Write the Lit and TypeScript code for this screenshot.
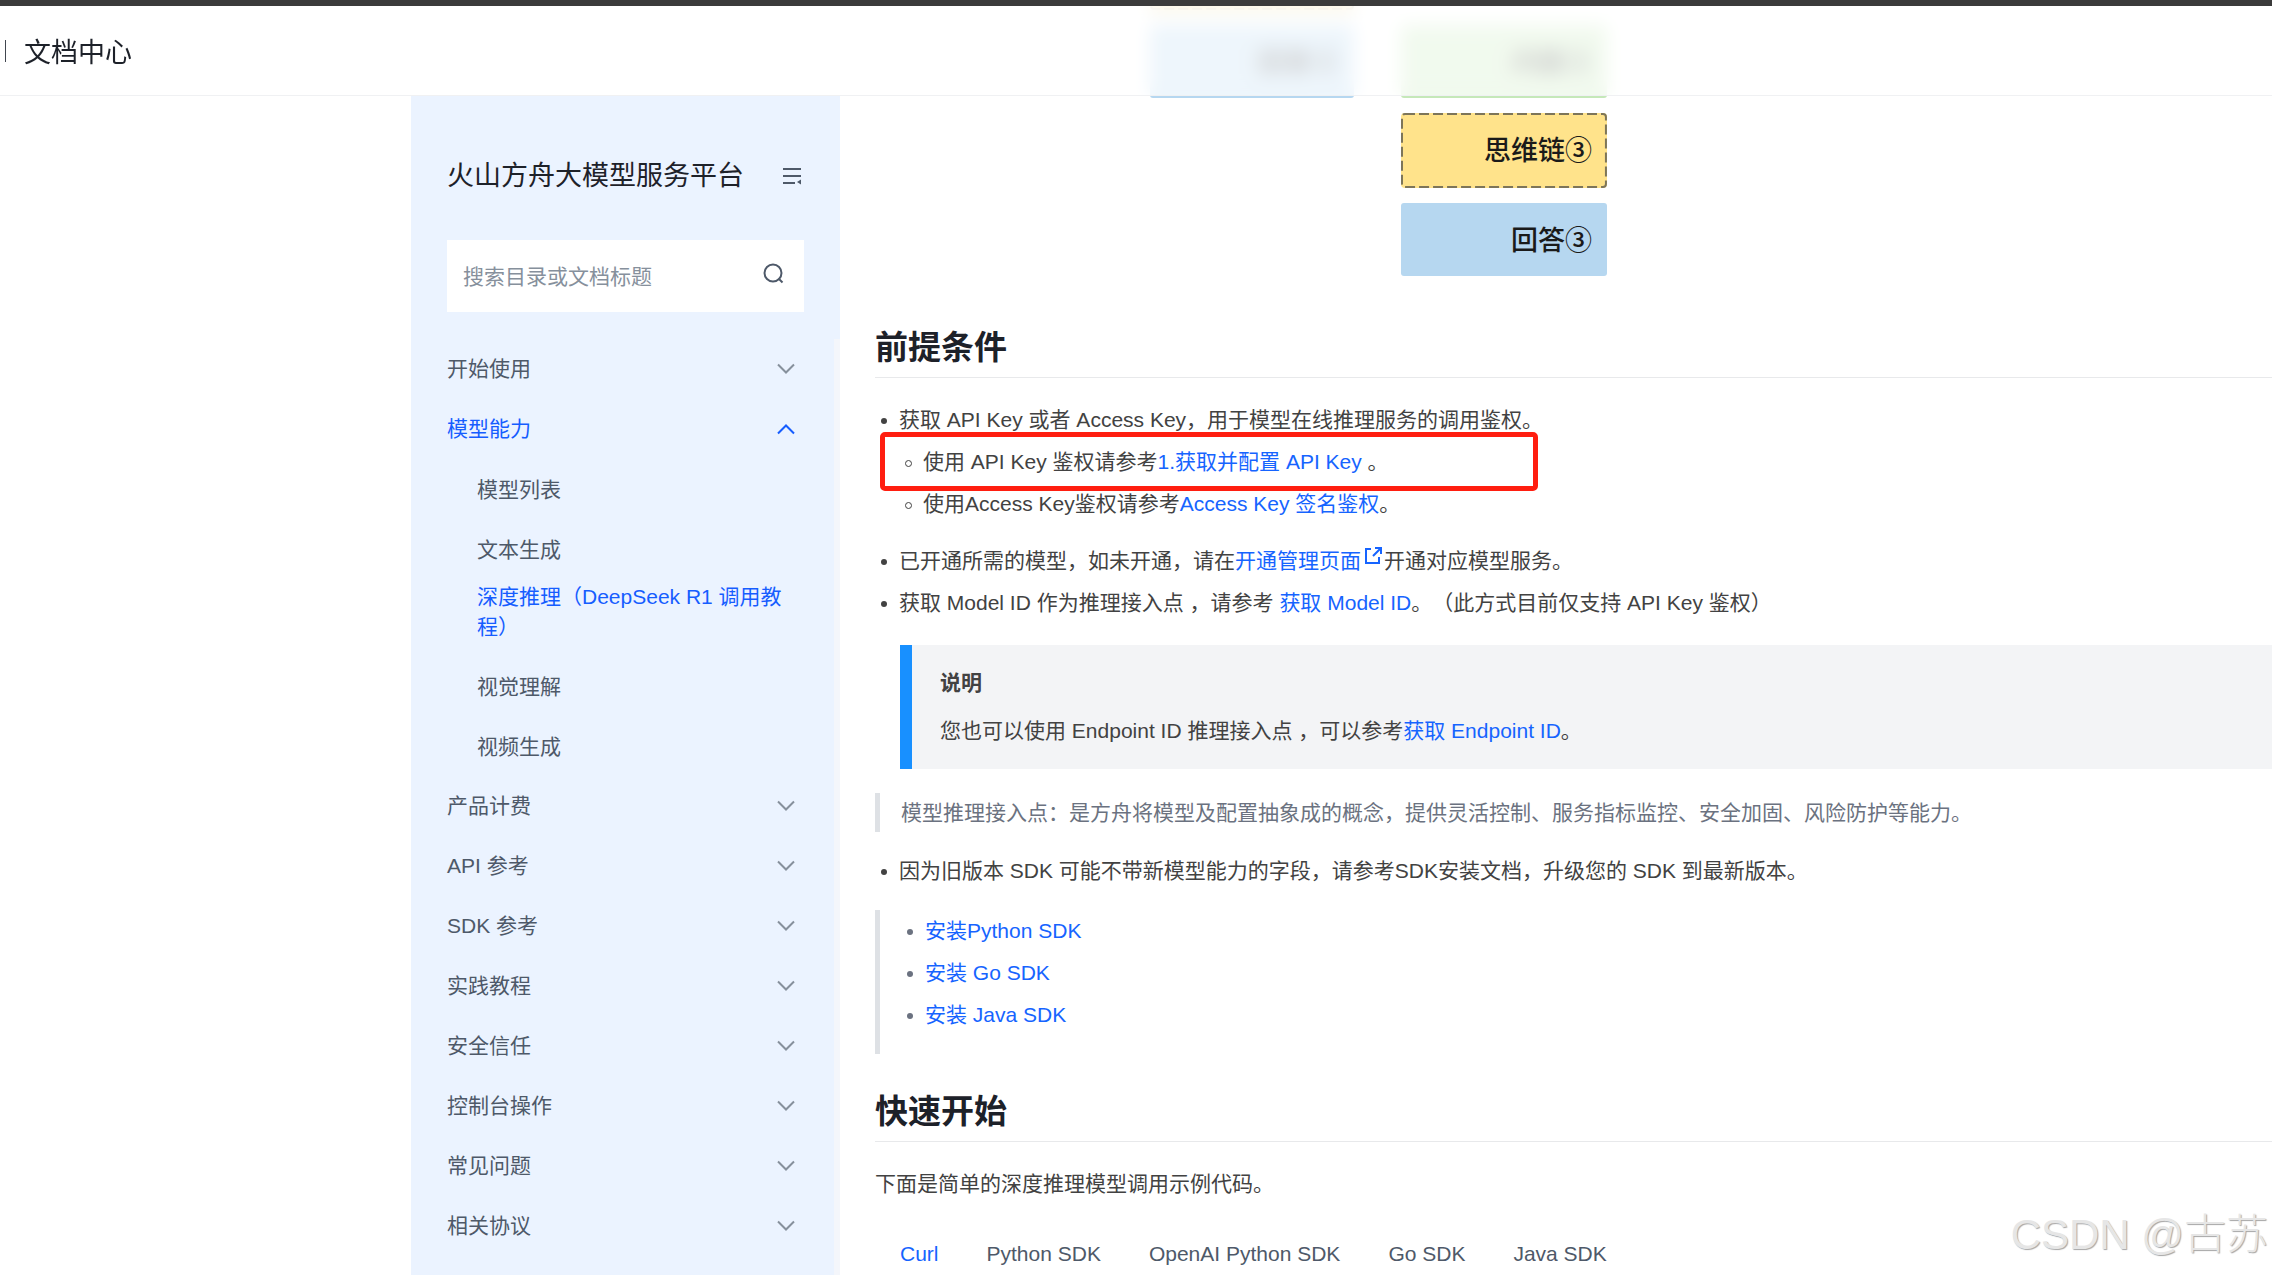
import { LitElement, html, css, nothing } from "lit";
import { customElement, property, state } from "lit/decorators.js";
import { classMap } from "lit/directives/class-map.js";

interface DocLink {
  label: string;
  current?: boolean;
}

interface DocGroup {
  label: string;
  children?: DocLink[];
}

const GROUPS: DocGroup[] = [
  { label: "开始使用" },
  {
    label: "模型能力",
    children: [
      { label: "模型列表" },
      { label: "文本生成" },
      { label: "深度推理（DeepSeek R1 调用教程）", current: true },
      { label: "视觉理解" },
      { label: "视频生成" },
    ],
  },
  { label: "产品计费" },
  { label: "API 参考" },
  { label: "SDK 参考" },
  { label: "实践教程" },
  { label: "安全信任" },
  { label: "控制台操作" },
  { label: "常见问题" },
  { label: "相关协议" },
];

const TABS = ["Curl", "Python SDK", "OpenAI Python SDK", "Go SDK", "Java SDK"];

@customElement("doc-sidebar")
export class DocSidebar extends LitElement {
  static styles = css`
    :host {
      display: flex;
      flex-direction: column;
      box-sizing: border-box;
      background: #ebf3ff;
      color: #1d2129;
    }
    .head {
      display: flex;
      align-items: center;
      justify-content: space-between;
      padding: 62px 39px 0 36px;
    }
    .title {
      margin: 0;
      font-size: 27px;
      font-weight: inherit;
      line-height: 36px;
    }
    button {
      border: 0;
      padding: 0;
      background: none;
      font: inherit;
      color: inherit;
      cursor: pointer;
    }
    svg {
      display: block;
      fill: none;
      stroke: currentColor;
    }
    .collapse {
      color: #4e5969;
    }
    .search {
      display: flex;
      align-items: center;
      height: 72px;
      margin: 46px 36px 27px;
      padding: 0 19px 0 16px;
      background: #fff;
    }
    .search input {
      flex: 1;
      min-width: 0;
      border: 0;
      outline: 0;
      padding: 2px 0 0;
      background: none;
      font: inherit;
      line-height: 30px;
      color: #1d2129;
    }
    .search input::placeholder {
      color: #86909c;
      opacity: 1;
    }
    .search button {
      color: #4e5969;
    }
    .tree {
      flex: 1;
      border-right: 6px solid #f4f6fb;
      padding: 0 39px 0 36px;
      color: #4e5969;
    }
    ul {
      list-style: none;
      margin: 0;
      padding: 0;
    }
    .group {
      display: flex;
      align-items: center;
      justify-content: space-between;
      width: 100%;
      height: 60px;
      line-height: 30px;
      text-align: left;
    }
    .group svg {
      color: #86909c;
    }
    .group.open,
    .group.open svg {
      color: #165dff;
    }
    .children {
      padding-left: 30px;
    }
    .children a {
      display: block;
      padding: 16px 0 14px;
      line-height: 30px;
      color: inherit;
      text-decoration: none;
    }
    .children a.current {
      padding: 3px 0 14px;
      color: #165dff;
    }
  `;

  @state() private open = "模型能力";

  private toggle(label: string) {
    this.open = this.open === label ? "" : label;
  }

  private chevron(up: boolean) {
    return html`<svg width="18" height="12" viewBox="0 0 18 12" stroke-width="2" aria-hidden="true">
      <path d=${up ? "M1 10.5 9 2.5l8 8" : "M1 1.5l8 8 8-8"} />
    </svg>`;
  }

  render() {
    return html`
      <div class="head">
        <h1 class="title">火山方舟大模型服务平台</h1>
        <button class="collapse" type="button" aria-label="收起目录">
          <svg width="18" height="18" viewBox="0 0 18 18" stroke-width="2">
            <path d="M0 2h18M0 9h18M0 16h12" />
            <path d="M18 12.5v5L14 15z" fill="currentColor" stroke="none" />
          </svg>
        </button>
      </div>
      <form class="search" role="search" @submit=${(e: Event) => e.preventDefault()}>
        <input type="text" aria-label="搜索目录或文档标题" placeholder="搜索目录或文档标题" />
        <button type="submit" aria-label="搜索">
          <svg width="22" height="26" viewBox="0 0 22 26" stroke-width="2">
            <circle cx="10" cy="10" r="8.5" />
            <path d="M15.5 15.5l4 4" />
          </svg>
        </button>
      </form>
      <nav class="tree" aria-label="文档目录">
        <ul>
          ${GROUPS.map((g) => {
            const open = this.open === g.label;
            return html`<li>
              <button
                type="button"
                class=${classMap({ group: true, open })}
                aria-expanded=${open ? "true" : "false"}
                @click=${() => this.toggle(g.label)}
              >
                <span>${g.label}</span>${this.chevron(open)}
              </button>
              ${open && g.children
                ? html`<ul class="children">
                    ${g.children.map(
                      (c) => html`<li>
                        <a
                          href="#"
                          class=${classMap({ current: !!c.current })}
                          aria-current=${c.current ? "page" : nothing}
                          >${c.label}</a
                        >
                      </li>`
                    )}
                  </ul>`
                : nothing}
            </li>`;
          })}
        </ul>
      </nav>
    `;
  }
}

@customElement("chat-diagram")
export class ChatDiagram extends LitElement {
  static styles = css`
    :host {
      display: grid;
      grid-template-columns: 204px 206px;
      column-gap: 47px;
      row-gap: 15px;
      font-size: 27px;
      font-weight: 500;
      color: #1a1a1a;
    }
    .box {
      box-sizing: border-box;
      height: 73px;
      padding-right: 15px;
      border-radius: 3px;
      line-height: 76px;
      text-align: right;
    }
    .thought {
      display: grid;
      height: 75px;
      padding: 0;
      border-radius: 4px;
      background: #ffe38b;
    }
    .thought rect {
      fill: none;
      stroke: #7d7559;
      stroke-width: 2;
      stroke-dasharray: 10 4;
    }
    .thought svg,
    .thought span {
      grid-area: 1 / 1;
    }
    .thought svg {
      width: 100%;
      height: 75px;
    }
    .thought span {
      padding-right: 15px;
    }
    .answer {
      background: #b6d7f0;
    }
    .question {
      background: #c5e8b9;
    }
    .second {
      grid-column: 2;
    }
  `;

  private thought(text: string, second: boolean) {
    return html`<div class=${classMap({ box: true, thought: true, second })}>
      <svg aria-hidden="true"><rect x="1" y="1" width="99%" height="73" rx="3" /></svg>
      ${text ? html`<span>${text}</span>` : nothing}
    </div>`;
  }

  render() {
    return html`
      ${this.thought("", false)}
      <div></div>
      <div class="box answer">回答②</div>
      <div class="box question">问题③</div>
      ${this.thought("思维链③", true)}
      <div class="box answer second">回答③</div>
    `;
  }
}

@customElement("code-tabs")
export class CodeTabs extends LitElement {
  static styles = css`
    :host {
      display: flex;
      gap: 48px;
      padding-left: 25px;
      color: #4e5969;
    }
    button {
      border: 0;
      padding: 0;
      background: none;
      font: inherit;
      line-height: 42px;
      color: inherit;
      cursor: pointer;
    }
    .active {
      color: #1664ff;
    }
  `;

  @property({ type: Number }) selected = 0;

  render() {
    return TABS.map(
      (t, i) => html`<button
        type="button"
        role="tab"
        aria-selected=${i === this.selected ? "true" : "false"}
        class=${classMap({ active: i === this.selected })}
        @click=${() => (this.selected = i)}
      >
        ${t}
      </button>`
    );
  }
}

@customElement("app-root")
export class AppRoot extends LitElement {
  static styles = css`
    :host {
      display: block;
      position: relative;
      height: 100vh;
      overflow: hidden;
      background: #fff;
      color: #424242;
      font-family: "Liberation Sans", "Noto Sans CJK SC", sans-serif;
      font-size: 21px;
      font-weight: 400;
      text-spacing-trim: space-all;
    }
    .top {
      position: absolute;
      z-index: 2;
      inset: 0 0 auto 0;
      box-sizing: border-box;
      height: 96px;
      border-top: 6px solid #3b3b3b;
      border-bottom: 1px solid #f0f1f3;
      display: flex;
      align-items: center;
      gap: 18px;
      padding: 0 5px;
      background: rgba(255, 255, 255, 0.76);
      backdrop-filter: blur(9px);
      color: #1d2129;
      font-size: 27px;
    }
    .top a {
      padding-top: 5px;
      color: inherit;
      text-decoration: none;
      line-height: 42px;
    }
    .rule {
      width: 1px;
      height: 22px;
      background: #41464f;
    }
    .page {
      display: grid;
      grid-template-columns: 429px minmax(0, 1fr);
      height: 100%;
      padding-left: 411px;
      box-sizing: border-box;
    }
    doc-sidebar {
      margin-top: 96px;
    }
    main {
      padding-left: 35px;
      white-space: nowrap;
    }
    chat-diagram {
      margin: -65px 0 46px 275px;
    }
    h2 {
      margin: 0 0 21px;
      padding-bottom: 3px;
      border-bottom: 1px solid #e8e9eb;
      font-size: 33px;
      font-weight: 700;
      line-height: 52px;
      color: #1d2129;
    }
    p {
      margin: 0;
      line-height: 42px;
    }
    a {
      color: #1664ff;
      text-decoration: none;
    }
    ul {
      list-style: none;
      margin: 0;
      padding: 0;
    }
    li {
      position: relative;
      padding-left: 24px;
      line-height: 42px;
    }
    li::before {
      content: "";
      position: absolute;
      left: 6px;
      top: 19px;
      width: 6px;
      height: 6px;
      border-radius: 50%;
      background: currentColor;
    }
    .sub {
      margin-bottom: 15px;
    }
    .sub li::before {
      box-sizing: border-box;
      width: 7px;
      height: 7px;
      border: 1px solid currentColor;
      background: none;
    }
    .marked::after {
      content: "";
      position: absolute;
      box-sizing: border-box;
      left: -19px;
      top: -9px;
      width: 658px;
      height: 59px;
      border: 5px solid #ff1e10;
      border-radius: 5px;
    }
    .ext {
      width: 18px;
      height: 18px;
      margin: 0 2px 0 3px;
      vertical-align: 3px;
      fill: none;
      stroke: currentColor;
      stroke-width: 2;
    }
    .note {
      margin: 21px 0 24px 25px;
      padding: 17px 28px;
      border-left: 12px solid #1890ff;
      background: #f3f4f6;
    }
    .note strong {
      display: block;
      margin-bottom: 6px;
      line-height: 42px;
      font-weight: 700;
    }
    blockquote {
      margin: 0 0 18px;
      border-left: 5px solid #dee1e5;
      padding-left: 21px;
      color: #6b7280;
    }
    blockquote p {
      line-height: 39px;
    }
    .sdks {
      margin: 18px 0 32px;
      padding-bottom: 18px;
    }
    code-tabs {
      margin-top: 28px;
    }
    .mark {
      position: absolute;
      right: 4px;
      bottom: 9px;
      font-size: 42px;
      font-weight: 300;
      line-height: 62px;
      color: #e6e6e6;
      text-shadow: 1px 1px 1px #a6a6a6;
    }
  `;

  render() {
    return html`
      <header class="top">
        <span class="rule"></span>
        <a href="#">文档中心</a>
      </header>
      <div class="page">
        <doc-sidebar></doc-sidebar>
        <main>
          <chat-diagram></chat-diagram>
          <h2>前提条件</h2>
          <ul>
            <li>
              获取 API Key 或者 Access Key，用于模型在线推理服务的调用鉴权。
              <ul class="sub">
                <li class="marked">使用 API Key 鉴权请参考<a href="#">1.获取并配置 API Key</a> 。</li>
                <li>使用Access Key鉴权请参考<a href="#">Access Key 签名鉴权</a>。</li>
              </ul>
            </li>
            <li>
              已开通所需的模型，如未开通，请在<a href="#"
                >开通管理页面<svg class="ext" viewBox="0 0 18 18" aria-hidden="true">
                  <path d="M7 2H2v14h13v-6M11 1h6v6M17 1l-8 8" /></svg></a
              >开通对应模型服务。
            </li>
            <li>获取 Model ID 作为推理接入点 ，请参考 <a href="#">获取 Model ID</a>。（此方式目前仅支持 API Key 鉴权）</li>
          </ul>
          <div class="note">
            <strong>说明</strong>
            <p>您也可以使用 Endpoint ID 推理接入点 ，可以参考<a href="#">获取 Endpoint ID</a>。</p>
          </div>
          <blockquote>
            <p>模型推理接入点：是方舟将模型及配置抽象成的概念，提供灵活控制、服务指标监控、安全加固、风险防护等能力。</p>
          </blockquote>
          <ul>
            <li>因为旧版本 SDK 可能不带新模型能力的字段，请参考SDK安装文档，升级您的 SDK 到最新版本。</li>
          </ul>
          <blockquote class="sdks">
            <ul>
              <li><a href="#">安装Python SDK</a></li>
              <li><a href="#">安装 Go SDK</a></li>
              <li><a href="#">安装 Java SDK</a></li>
            </ul>
          </blockquote>
          <h2>快速开始</h2>
          <p>下面是简单的深度推理模型调用示例代码。</p>
          <code-tabs role="tablist"></code-tabs>
        </main>
      </div>
      <div class="mark">CSDN @古苏</div>
    `;
  }
}
